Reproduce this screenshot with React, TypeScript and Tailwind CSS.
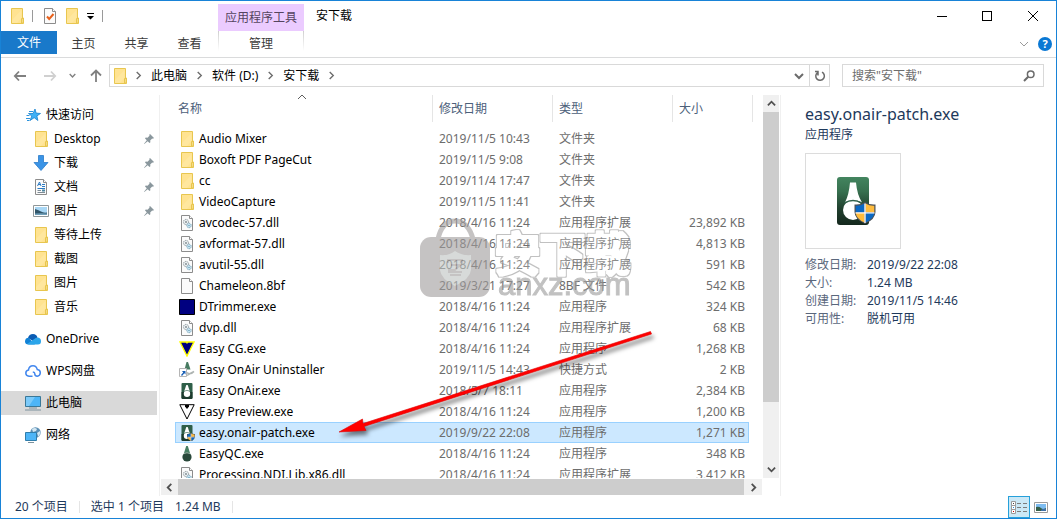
import type { ReactNode } from 'react';

type FileKind =
  | 'folder'
  | 'dll'
  | 'blank'
  | 'trimmer'
  | 'cg'
  | 'shortcut'
  | 'onair'
  | 'preview'
  | 'patch'
  | 'qc';

interface FileRow {
  name: string;
  date: string;
  type: string;
  size: string;
  kind: FileKind;
}

const FILES: FileRow[] = [
  { name: 'Audio Mixer', date: '2019/11/5 10:43', type: '文件夹', size: '', kind: 'folder' },
  { name: 'Boxoft PDF PageCut', date: '2019/11/5 9:08', type: '文件夹', size: '', kind: 'folder' },
  { name: 'cc', date: '2019/11/4 17:47', type: '文件夹', size: '', kind: 'folder' },
  { name: 'VideoCapture', date: '2019/11/5 11:41', type: '文件夹', size: '', kind: 'folder' },
  { name: 'avcodec-57.dll', date: '2018/4/16 11:24', type: '应用程序扩展', size: '23,892 KB', kind: 'dll' },
  { name: 'avformat-57.dll', date: '2018/4/16 11:24', type: '应用程序扩展', size: '4,813 KB', kind: 'dll' },
  { name: 'avutil-55.dll', date: '2018/4/16 11:24', type: '应用程序扩展', size: '591 KB', kind: 'dll' },
  { name: 'Chameleon.8bf', date: '2019/3/21 17:27', type: '8BF 文件', size: '542 KB', kind: 'blank' },
  { name: 'DTrimmer.exe', date: '2018/4/16 11:24', type: '应用程序', size: '324 KB', kind: 'trimmer' },
  { name: 'dvp.dll', date: '2018/4/16 11:24', type: '应用程序扩展', size: '68 KB', kind: 'dll' },
  { name: 'Easy CG.exe', date: '2018/4/16 11:24', type: '应用程序', size: '1,268 KB', kind: 'cg' },
  { name: 'Easy OnAir Uninstaller', date: '2019/11/5 14:43', type: '快捷方式', size: '2 KB', kind: 'shortcut' },
  { name: 'Easy OnAir.exe', date: '2018/5/7 18:11', type: '应用程序', size: '2,384 KB', kind: 'onair' },
  { name: 'Easy Preview.exe', date: '2018/4/16 11:24', type: '应用程序', size: '1,200 KB', kind: 'preview' },
  { name: 'easy.onair-patch.exe', date: '2019/9/22 22:08', type: '应用程序', size: '1,271 KB', kind: 'patch' },
  { name: 'EasyQC.exe', date: '2018/4/16 11:24', type: '应用程序', size: '348 KB', kind: 'qc' },
  { name: 'Processing.NDI.Lib.x86.dll', date: '2018/4/16 11:24', type: '应用程序扩展', size: '3,412 KB', kind: 'dll' },
];

const SELECTED = 'easy.onair-patch.exe';

const DETAILS = [
  ['修改日期:', '2019/9/22 22:08'],
  ['大小:', '1.24 MB'],
  ['创建日期:', '2019/11/5 14:46'],
  ['可用性:', '脱机可用'],
];

function Icon({ children }: { children: ReactNode }) {
  return (
    <svg viewBox="0 0 16 16" className="size-4 shrink-0" aria-hidden="true">
      {children}
    </svg>
  );
}

function FolderIcon() {
  return (
    <Icon>
      <path d="M2.5.5h11v9.500h1v5.500h-12z" fill="#ffe391" stroke="#e8c64f" />
      <path d="M3 12 12.500 2v8L8 15H3z" fill="#ffe9a6" opacity=".6" />
      <path d="M12.500 15V10.500h1.500V15z" fill="#fff0bd" stroke="#e8c64f" />
    </Icon>
  );
}

function PageShape() {
  return (
    <>
      <path d="M2.500.5h8l3 3v12h-11z" fill="#fbfbfb" stroke="#8c8c8c" />
      <path d="M10.500.5v3h3" fill="#fff" stroke="#8c8c8c" />
    </>
  );
}

function DllIcon() {
  return (
    <Icon>
      <PageShape />
      <circle cx="7" cy="7" r="2.600" fill="#e9eef0" stroke="#8b969b" strokeDasharray="1.200 .6" />
      <circle cx="7" cy="7" r=".9" fill="#7c878c" />
      <circle cx="10" cy="10.500" r="2.200" fill="#cfe9f5" stroke="#6f9fb5" strokeDasharray="1.200 .6" />
      <circle cx="10" cy="10.500" r=".7" fill="#5594b3" />
    </Icon>
  );
}

function Shield({ transform }: { transform?: string }) {
  return (
    <g transform={transform}>
      <path d="M0 2.500Q6 3 10.500 0 15 3 21 2.500V10q0 7-10.500 12Q0 17 0 10z" fill="#4c5258" />
      <path d="M1.200 3.700Q6 4 10 1.500V10H1.200z" fill="#0a68c4" />
      <path d="M11 1.500Q15 4 19.800 3.700V10H11z" fill="#ffbc3d" />
      <path d="M1.200 11H10v9.500Q2 17 1.200 11z" fill="#ffbc3d" />
      <path d="M11 11h8.800Q19 17 11 20.500z" fill="#0a68c4" />
      <path d="M10.500 1.500v19.500M1 10.800h19" stroke="#fff" strokeWidth="1.300" />
    </g>
  );
}

function FileIcon({ kind }: { kind: FileKind }) {
  switch (kind) {
    case 'folder':
      return <FolderIcon />;
    case 'dll':
      return <DllIcon />;
    case 'blank':
      return (
        <Icon>
          <PageShape />
        </Icon>
      );
    case 'trimmer':
      return (
        <Icon>
          <path d="M.5.5h15v15H.5z" fill="#000080" stroke="#000" />
        </Icon>
      );
    case 'cg':
      return (
        <Icon>
          <path d="M1 1h14L8 15z" fill="#000080" stroke="#ff0" strokeWidth="1.400" />
          <path d="M6.500 1h3L8 3z" fill="#ff0" />
        </Icon>
      );
    case 'preview':
      return (
        <Icon>
          <path d="M.8.7h14.400L8 15z" fill="#fff" stroke="#000" />
          <path d="M6 1h4v1.500L8 5 6 2.500z" fill="#000" />
        </Icon>
      );
    case 'shortcut':
      return (
        <Icon>
          <path d="M7.500 0h1.500l2.500 7.500h-6z" fill="#477b61" />
          <path d="M8 10.500q3 3 7-1M8 13.500q3-2 7-4" fill="none" stroke="#aeb4b2" strokeWidth="1.500" />
          <path d="M.5 6.500h7v8h-7z" fill="#fff" stroke="#b5b5b5" />
          <path d="M3 9h3.500v3.500l-1.200-1.200L3 14 2 13l2.200-2.500z" fill="#175eb5" />
        </Icon>
      );
    case 'qc':
      return (
        <Icon>
          <path d="M7.200 0h1.600l2.200 7H5z" fill="#487f63" />
          <circle cx="8" cy="11" r="4.600" fill="#29483a" />
          <path d="M5 7.500q3-1.500 6 0" stroke="#9bb3a6" fill="none" />
        </Icon>
      );
    case 'onair':
    case 'patch':
      return (
        <Icon>
          <rect x="2.500" width="11" height="16" rx="1" fill="#2f5f49" />
          <path d="M2.500 9h11v6l-1 1h-9l-1-1z" fill="#1d3b2e" />
          <path d="M7.300 2h1.400l2 6H5.300z" fill="#fff" />
          <circle cx="8" cy="10.700" r="3.200" fill="#fff" />
          <path d="M5.500 8q2.500-1.200 5 0" stroke="#2f5f49" strokeWidth=".6" fill="none" />
          {kind === 'patch' && <Shield transform="translate(8 8) scale(.38)" />}
        </Icon>
      );
  }
}

function PictureIcon() {
  return (
    <Icon>
      <path d="M.5 2.500h15v11H.5z" fill="#fff" stroke="#8f9799" />
      <path d="M2 4h12v8H2z" fill="#a9d7f5" />
      <path d="M2 6q4 1 6 2.500t6 1V12H2z" fill="#31566a" />
      <path d="M2 10.500q6-.5 12 0V12H2z" fill="#6f9fb9" />
    </Icon>
  );
}

function DocumentIcon() {
  return (
    <Icon>
      <PageShape />
      <path d="M4.500 7 6.500 3 8 7M5 5.500h3M9 5.500h3M9 7.500h3M4.500 9.500H12" stroke="#2b7bc4" fill="none" />
      <path d="M4.500 11.500H8M4.500 13.500H12" stroke="#7e8b95" />
      <path d="M9 10.500h3v2H9z" fill="#4d86a0" />
    </Icon>
  );
}

function Chevron({ dir, className }: { dir: 'up' | 'down' | 'left' | 'right'; className: string }) {
  const paths = {
    up: 'M1 7 5 3l4 4',
    down: 'M1 3l4 4 4-4',
    left: 'M7 1 3 5l4 4',
    right: 'M3 1l4 4-4 4',
  };
  return (
    <svg viewBox="0 0 10 10" fill="none" stroke="currentColor" className={className} aria-hidden="true">
      <path d={paths[dir]} />
    </svg>
  );
}

function PinIcon() {
  return (
    <svg viewBox="0 0 10 10" className="size-[10px]" aria-hidden="true">
      <path d="M6 0l4 4-1 .7-.8-.2-2 2 .2 1.800-.9.700L3.700 7.200.3 10 0 9.700l2.800-3.400L1 4.500l.7-.9 1.800.2 2-2L5.300.8z" fill="#8a979d" />
    </svg>
  );
}

function SideItem({
  icon,
  label,
  child,
  pinned,
  current,
}: {
  icon: ReactNode;
  label: string;
  child?: boolean;
  pinned?: boolean;
  current?: boolean;
}) {
  return (
    <li>
      <button
        type="button"
        aria-current={current}
        className={`flex h-6 w-full items-center gap-[5px] pr-[3px] text-left ${child ? 'pl-8' : 'pl-6'} ${
          current ? 'bg-[#d9d9d9]' : ''
        }`}
      >
        {icon}
        <span className="flex-1">{label}</span>
        {pinned && <PinIcon />}
      </button>
    </li>
  );
}

function Sidebar() {
  return (
    <nav aria-label="导航窗格" className="w-[159px] shrink-0 border-r border-[#f0f0f0] pt-2 pr-[2px]">
      <ul>
        <SideItem
          label="快速访问"
          icon={
            <Icon>
              <path d="M10 2l1.100 4.100 4.400.4-3.600 2.400 1 4.600-3.700-2.800-4.200 2.800 1.800-4.500-3.300-2.500h4.500z" fill="#3fb0f5" stroke="#1b83cf" strokeWidth=".8" />
              <path d="M4 4.500h4M1.500 8.500h3M1 11.500h4M2 13.500h2.500" stroke="#2d93dc" />
            </Icon>
          }
        />
        <SideItem child pinned label="Desktop" icon={<FolderIcon />} />
        <SideItem
          child
          pinned
          label="下载"
          icon={
            <Icon>
              <path d="M5.500.5h5v7h4.500L8 15.500 1 7.500h4.500z" fill="#3b94e6" stroke="#2a7bc9" strokeWidth=".8" />
            </Icon>
          }
        />
        <SideItem child pinned label="文档" icon={<DocumentIcon />} />
        <SideItem child pinned label="图片" icon={<PictureIcon />} />
        <SideItem child label="等待上传" icon={<FolderIcon />} />
        <SideItem child label="截图" icon={<FolderIcon />} />
        <SideItem child label="图片" icon={<FolderIcon />} />
        <SideItem child label="音乐" icon={<FolderIcon />} />
      </ul>
      <ul className="mt-2 flex flex-col gap-2">
        <SideItem
          label="OneDrive"
          icon={
            <Icon>
              <path d="M3 7Q4 3 8 3q3.500 0 4.500 3.500L8 10z" fill="#0a5cb3" />
              <path d="M3.500 13.500Q0 13.500 0 10.300 0 7 3.500 6.700L10 13.500z" fill="#1282d6" />
              <path d="M2 13l8-5.500q1-1 3-1 3 .5 3 3.700t-3 3.300H4z" fill="#2ba5ea" />
            </Icon>
          }
        />
        <SideItem
          label="WPS网盘"
          icon={
            <Icon>
              <path
                d="M7.500 13.300H4q-3.200-.3-3.200-3.200Q.9 7.500 3.500 7 4 2.700 8 2.700q3.300 0 4.300 3.800 3 .5 3 3.300-.2 3.200-3 3.500Q9.800 13 9.800 11q.2-1.700-2-2"
                fill="none"
                stroke="#4287ee"
                strokeWidth="1.500"
              />
            </Icon>
          }
        />
        <SideItem
          current
          label="此电脑"
          icon={
            <Icon>
              <path d="M.5 1.500h15v10H.5z" fill="#4db5f7" stroke="#3a7898" />
              <path d="M1 2h9l-6 9H1z" fill="#7ccaf9" />
              <path d="M4 13h8M0 15h16" stroke="#7c929e" />
            </Icon>
          }
        />
        <SideItem
          label="网络"
          icon={
            <Icon>
              <circle cx="10.500" cy="5.500" r="5.200" fill="#5b8fb5" />
              <path d="M7 2q3-2 5 0l-1 2-3 1zM12 6l3-2 .5 2-2 4z" fill="#d4e7f2" />
              <path d="M.5 5.500h11v8H.5z" fill="#4db5f7" stroke="#2f7dab" />
              <path d="M3 15.500h6" stroke="#7c929e" />
            </Icon>
          }
        />
      </ul>
    </nav>
  );
}

function TitleBar() {
  return (
    <header className="flex h-[30px] shrink-0">
      <div className="flex w-[217px] items-center pl-2">
        <FolderIcon />
        <span className="ml-[7px] h-3 w-px bg-[#9a9a9a]" />
        <button type="button" aria-label="属性" className="ml-[9px]">
          <Icon>
            <PageShape />
            <path d="M5 8.500l2.200 2.500L11.500 6" fill="none" stroke="#e8611c" strokeWidth="2" />
          </Icon>
        </button>
        <button type="button" aria-label="新建文件夹" className="ml-[6px]">
          <FolderIcon />
        </button>
        <button type="button" aria-label="自定义快速访问工具栏" className="ml-[7px]">
          <svg viewBox="0 0 7 7" className="size-[7px]" aria-hidden="true">
            <path d="M0 0h7v1H0zM0 3h7L3.500 6.500z" />
          </svg>
        </button>
        <span className="ml-2 h-3 w-px bg-[#9a9a9a]" />
      </div>
      <div className="mt-[3px] flex w-[86px] items-center justify-center bg-[#ebcbff] text-[#54445e]">应用程序工具</div>
      <h1 className="ml-3 flex flex-1 items-center">安下载</h1>
      <div className="flex">
        <button type="button" aria-label="最小化" className="flex w-[45px] items-center justify-center">
          <span className="h-px w-[10px] bg-black" />
        </button>
        <button type="button" aria-label="最大化" className="flex w-[45px] items-center justify-center">
          <span className="size-[10px] border border-black" />
        </button>
        <button type="button" aria-label="关闭" className="flex w-[47px] items-center justify-center">
          <svg viewBox="0 0 10 10" className="size-[10px]" stroke="#000" aria-hidden="true">
            <path d="M0 0l10 10M10 0 0 10" />
          </svg>
        </button>
      </div>
    </header>
  );
}

function RibbonTabs() {
  return (
    <div className="flex h-[27px] shrink-0 border-b border-[#dadbdc] text-[#3b3b3b]">
      <button type="button" className="h-[23px] w-14 bg-[#1979ca] text-white">
        文件
      </button>
      {['主页', '共享', '查看'].map((t) => (
        <button key={t} type="button" className="h-[25px] w-[53px]">
          {t}
        </button>
      ))}
      <div className="ml-[2px] flex h-5 w-[86px] bg-linear-to-b from-[#cfcfcf] to-white px-px">
        <button type="button" className="h-[25px] flex-1 bg-white">
          管理
        </button>
      </div>
      <div className="ml-auto flex h-[25px] items-center gap-[9px] pr-1">
        <button type="button" aria-label="展开功能区">
          <Chevron dir="down" className="size-[10px] text-[#9a9a9a]" />
        </button>
        <button type="button" aria-label="帮助" className="size-[14px] rounded-full bg-[#0a78d4] text-[11px] leading-[14px] font-bold text-white">
          ?
        </button>
      </div>
    </div>
  );
}

function AddressBar() {
  return (
    <div className="flex h-[37px] shrink-0 pt-[6px] pr-3">
      <div className="flex h-[23px] w-[108px] items-center pl-3 text-[#808080]">
        <button type="button" aria-label="后退">
          <svg viewBox="0 0 14 12" className="h-3 w-[14px]" fill="none" stroke="currentColor" strokeWidth="1.800" aria-hidden="true">
            <path d="M6 1.500 1.800 6 6 10.500M2 6h11" />
          </svg>
        </button>
        <button type="button" aria-label="前进" className="ml-4 text-[#d0d0d0]">
          <svg viewBox="0 0 14 12" className="h-3 w-[14px]" fill="none" stroke="currentColor" strokeWidth="1.800" aria-hidden="true">
            <path d="M8 1.500 12.200 6 8 10.500M12 6H1" />
          </svg>
        </button>
        <button type="button" aria-label="最近浏览的位置" className="ml-3">
          <Chevron dir="down" className="size-[7px] stroke-2" />
        </button>
        <button type="button" aria-label="上移" className="ml-[14px]">
          <svg viewBox="0 0 12 14" className="h-[14px] w-3" fill="none" stroke="currentColor" strokeWidth="1.800" aria-hidden="true">
            <path d="M1 6.500l5-5 5 5M6 2v11" />
          </svg>
        </button>
      </div>
      <div className="flex h-[23px] flex-1 items-center border border-[#d9d9d9] pl-[2px]">
        <FolderIcon />
        {['此电脑', '软件 (D:)', '安下载'].map((crumb, i) => (
          <span key={crumb} className="flex items-center">
            <Chevron
              dir="right"
              className={`mr-2 size-[9px] stroke-[1.500] text-[#6b6b6b] ${i === 0 ? 'ml-[6px]' : 'ml-2'}`}
            />
            <button type="button" className="whitespace-nowrap">
              {crumb}
            </button>
          </span>
        ))}
        <Chevron dir="right" className="mx-2 size-[9px] stroke-[1.500] text-[#6b6b6b]" />
        <button type="button" aria-label="以前的位置" className="ml-auto flex h-full w-5 items-center justify-center text-[#6b6b6b]">
          <Chevron dir="down" className="size-[10px] stroke-2" />
        </button>
        <button type="button" aria-label="刷新" className="flex h-full w-5 items-center justify-center border-l border-[#d9d9d9]">
          <svg viewBox="0 0 12 12" className="size-3" fill="none" stroke="#6b6b6b" strokeWidth="1.500" aria-hidden="true">
            <path d="M8 2.200A4.300 4.300 0 1 1 3.500 2.600M4 5.500V1.500H1" />
          </svg>
        </button>
      </div>
      <div className="ml-3 flex h-[23px] w-[202px] items-center border border-[#d9d9d9] pr-2 pl-[9px]">
        <input type="search" aria-label="搜索" placeholder={'搜索"安下载"'} className="min-w-0 flex-1 outline-none placeholder:text-[#6d6d6d]" />
        <svg viewBox="0 0 12 12" className="size-3" fill="none" stroke="#6b6b6b" aria-hidden="true">
          <circle cx="7.700" cy="4.300" r="3.300" strokeWidth="1.500" />
          <path d="M5.200 6.800 1 11" strokeWidth="2" />
        </svg>
      </div>
    </div>
  );
}

function HeaderCell({ label, className, sorted }: { label: string; className: string; sorted?: boolean }) {
  return (
    <th scope="col" className="h-[33px] p-0 align-top font-normal">
      <div className={`relative flex h-[27px] items-center border-r border-[#e5e5e5] text-left text-[#4c607a] ${className}`}>
        {label}
        {sorted && <Chevron dir="up" className="absolute -top-[3px] left-[122px] size-[10px] text-[#5f5f5f]" />}
      </div>
    </th>
  );
}

function FileTable() {
  return (
    <table className="w-[574px] table-fixed border-separate border-spacing-0">
      <colgroup>
        <col className="w-[258px]" />
        <col className="w-[120px]" />
        <col className="w-[120px]" />
        <col className="w-[76px]" />
      </colgroup>
      <thead>
        <tr>
          <HeaderCell label="名称" className="pl-[3px]" sorted />
          <HeaderCell label="修改日期" className="pl-[6px]" />
          <HeaderCell label="类型" className="pl-[6px]" />
          <HeaderCell label="大小" className="w-20 pl-[6px]" />
        </tr>
      </thead>
      <tbody>
        {FILES.map((f) => {
          const on = f.name === SELECTED;
          const cell = on ? 'border-y border-[#99d1ff] bg-[#cce8ff]' : '';
          return (
            <tr key={f.name} aria-selected={on} className="h-[21px] text-[#6d6d6d]">
              <td className={`p-0 text-black ${cell} ${on ? 'border-l pl-[3px]' : 'pl-1'}`}>
                <div className="flex h-[19px] items-center gap-1">
                  <FileIcon kind={f.kind} />
                  <span>{f.name}</span>
                </div>
              </td>
              <td className={`p-0 pl-[6px] ${cell}`}>{f.date}</td>
              <td className={`p-0 pl-[6px] ${cell}`}>{f.type}</td>
              <td className={`p-0 text-right ${cell} ${on ? 'border-r pr-[3px]' : 'pr-1'}`}>{f.size}</td>
            </tr>
          );
        })}
      </tbody>
    </table>
  );
}

function Watermark() {
  return (
    <svg
      viewBox="0 0 220 84"
      className="pointer-events-none absolute top-[121px] left-[257px] h-[84px] w-[220px] opacity-60"
      aria-hidden="true"
    >
      <defs>
        <filter id="rim" x="-10%" y="-10%" width="120%" height="120%">
          <feMorphology in="SourceAlpha" operator="dilate" radius="2" result="outer" />
          <feMorphology in="SourceAlpha" operator="dilate" radius="1" result="inner" />
          <feFlood floodColor="#999" result="ink" />
          <feComposite in="ink" in2="outer" operator="in" result="thick" />
          <feComposite in="thick" in2="inner" operator="out" result="ring" />
          <feFlood floodColor="#fff" floodOpacity=".35" result="paper" />
          <feComposite in="paper" in2="inner" operator="in" result="body" />
          <feMerge>
            <feMergeNode in="body" />
            <feMergeNode in="ring" />
          </feMerge>
        </filter>
      </defs>
      <path d="M20 23Q24 5 37 5t18 18" fill="none" stroke="#a09c9c" strokeWidth="5" />
      <rect x="2" y="21" width="70" height="60" rx="11" fill="#a09c9c" />
      <path d="M22 39q9 1 15-4 7 5 16 4v15q-1 9-16 16-14-7-15-16z" fill="#bdc3c1" />
      <path d="M30 47v-3h14v3M33 49h9l-5 5h-7M30 56h14M32 59h11" fill="none" stroke="#a09c9c" strokeWidth="2" />
      <text
        x="77"
        y="55"
        fontSize="45"
        fontWeight="500"
        stroke="#000"
        strokeWidth="2"
        strokeLinejoin="round"
        filter="url(#rim)"
        className="font-['Noto_Sans_CJK_SC',sans-serif]"
      >
        安下载
      </text>
      <text x="80" y="79" fontSize="31" fill="#999" stroke="#999" strokeWidth="1" className="font-['Liberation_Sans',sans-serif]">
        anxz.com
      </text>
    </svg>
  );
}

function RedArrow() {
  return (
    <svg
      viewBox="0 0 330 120"
      className="pointer-events-none absolute top-[230px] left-[174px] h-[120px] w-[330px] drop-shadow-[2px_4px_2px_rgba(0,0,0,0.5)]"
      aria-hidden="true"
    >
      <path d="M4 107 27.500 94 28 98.500 315.500 6.500 316.500 9 29 101.500 31 105.500z" fill="#f00" stroke="#d00" strokeWidth=".6" strokeLinejoin="round" />
    </svg>
  );
}

function FilePane() {
  return (
    <main className="mr-px mb-px ml-px grid min-w-0 flex-1 grid-cols-[minmax(0,1fr)_16px] grid-rows-[minmax(0,1fr)_16px] gap-px">
      <div className="relative overflow-hidden pl-[14px]">
        <FileTable />
        <Watermark />
        <RedArrow />
      </div>
      <div className="flex flex-col bg-[#f0f0f0] text-[#505050]">
        <button type="button" aria-label="向上滚动" className="flex h-[17px] items-center justify-center">
          <Chevron dir="up" className="size-[9px] stroke-2" />
        </button>
        <div className="flex flex-1 flex-col">
          <div className="h-[83%] bg-[#cdcdcd]" />
        </div>
        <button type="button" aria-label="向下滚动" className="flex h-[17px] items-center justify-center">
          <Chevron dir="down" className="size-[9px] stroke-2" />
        </button>
      </div>
      <div className="flex bg-[#f0f0f0] text-[#505050]">
        <button type="button" aria-label="向左滚动" className="flex w-[17px] items-center justify-center">
          <Chevron dir="left" className="size-[9px] stroke-2" />
        </button>
        <div className="flex-1 bg-[#cdcdcd]" />
        <button type="button" aria-label="向右滚动" className="flex w-[18px] items-center justify-center">
          <Chevron dir="right" className="size-[9px] stroke-2" />
        </button>
      </div>
    </main>
  );
}

function DetailsPane() {
  return (
    <aside className="w-[276px] shrink-0 border-l border-[#f0f0f0] pt-[7px] pl-6 text-[#1e395b]">
      <h2 className="text-base leading-6">easy.onair-patch.exe</h2>
      <p className="leading-[18px]">应用程序</p>
      <div className="mt-[9px] flex size-24 items-center justify-center border border-[#dcdcdc]">
        <svg viewBox="0 0 48 48" className="size-12" aria-hidden="true">
          <defs>
            <linearGradient id="bottle" x1="0" y1="0" x2="0" y2="1">
              <stop offset="0" stopColor="#43855f" />
              <stop offset=".3" stopColor="#37704f" />
              <stop offset=".65" stopColor="#21412f" />
              <stop offset="1" stopColor="#14281d" />
            </linearGradient>
          </defs>
          <rect x="8" width="32" height="48" rx="3" fill="url(#bottle)" />
          <path d="M21 5.500h6q1 12 6 20-9-5-17 0 4-8 5-20z" fill="#fff" />
          <circle cx="24" cy="33" r="10" fill="#fff" />
          <path d="M15.500 26q8.500-5 17 0" fill="none" stroke="#31614a" strokeWidth="1.500" />
          <Shield transform="translate(25.500 25)" />
        </svg>
      </div>
      <dl className="mt-[7px] grid grid-cols-[62px_1fr] leading-[18px]">
        {DETAILS.map(([label, value]) => (
          <div key={label} className="contents">
            <dt className="text-[#5a677c]">{label}</dt>
            <dd>{value}</dd>
          </div>
        ))}
      </dl>
    </aside>
  );
}

function StatusBar() {
  return (
    <footer className="flex h-[22px] shrink-0 items-center pr-1 pl-[14px] text-[#1e395b]">
      <span>20 个项目</span>
      <span className="mx-[11px] h-3 w-px bg-[#e5e5e5]" />
      <span>选中 1 个项目</span>
      <span className="ml-[11px]">1.24 MB</span>
      <span className="ml-[11px] h-3 w-px bg-[#e5e5e5]" />
      <button
        type="button"
        aria-label="详细信息"
        aria-pressed="true"
        className="ml-auto flex h-full w-[22px] items-center justify-center border border-[#26a0da] bg-[#cbe8f6]"
      >
        <svg viewBox="0 0 16 13" className="h-[13px] w-4" fill="none" aria-hidden="true">
          <path d="M.5.5h4v4h-4zM.5 4.500h4v4h-4zM.5 8.500h4v4h-4z" fill="#fff" stroke="#9a9a9a" />
          <path d="M6 2.500h4M12 2.500h4M6 6.500h4M12 6.500h4M6 10.500h4M12 10.500h4" stroke="#7c7c7c" />
          <path d="M2 2h1v1H2z" fill="#444" />
          <path d="M2 6h1v1H2z" fill="#2b8fe0" />
          <path d="M2 10h1v1H2z" fill="#c00" />
        </svg>
      </button>
      <button type="button" aria-label="大缩略图" className="flex h-full w-[22px] items-center justify-center">
        <svg viewBox="0 0 14 11" className="h-[11px] w-[14px]" aria-hidden="true">
          <path d="M.5.5h13v10H.5z" fill="#fff" stroke="#9a9a9a" />
          <path d="M2 2h10v7H2z" fill="#7dbcf0" />
          <path d="M2 5q3-1 5 1t5 0v3H2z" fill="#35604a" />
          <path d="M7 8q3-2 5-1v2H7z" fill="#3d6fa8" />
        </svg>
      </button>
    </footer>
  );
}

export default function App() {
  return (
    <div className="flex h-screen flex-col overflow-hidden border border-[#1883d7] bg-white font-['Noto_Sans','Noto_Sans_CJK_SC',sans-serif] text-xs leading-4 text-black">
      <TitleBar />
      <RibbonTabs />
      <AddressBar />
      <div className="flex min-h-0 flex-1">
        <Sidebar />
        <FilePane />
        <DetailsPane />
      </div>
      <StatusBar />
    </div>
  );
}
